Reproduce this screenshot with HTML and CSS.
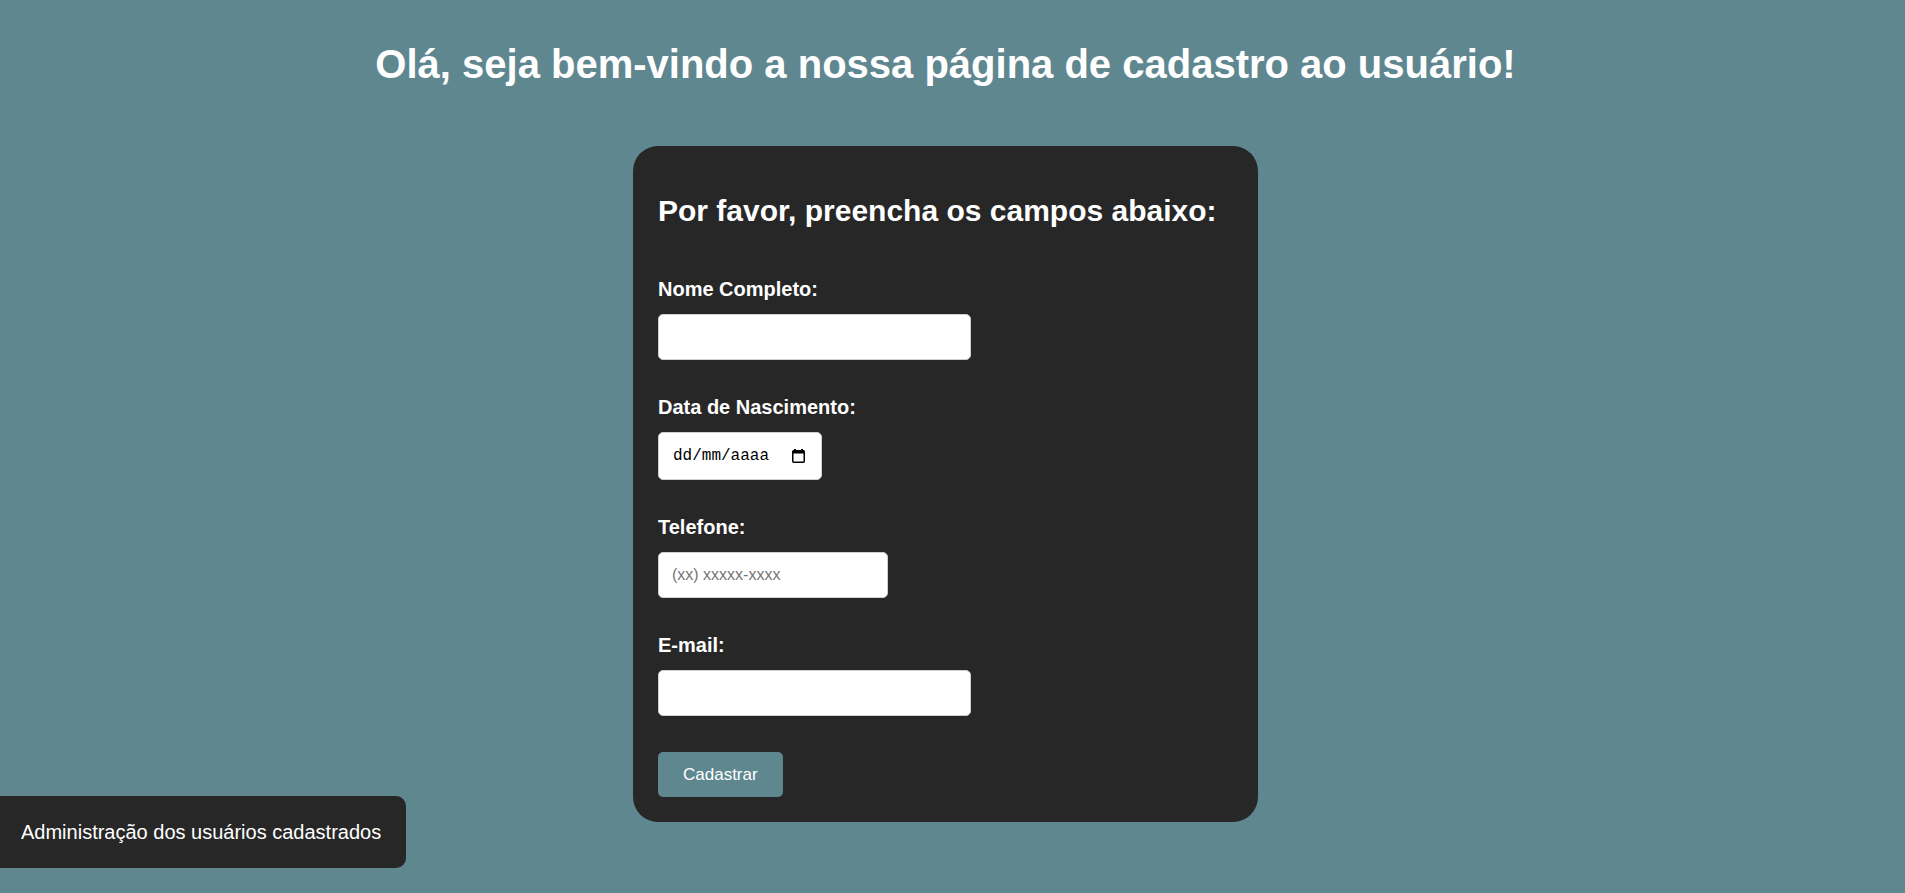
FILE: index.html
```html
<!DOCTYPE html>
<html lang="pt-BR">
<head>
<meta charset="utf-8">
<title>Cadastro de usuário</title>
<link rel="stylesheet" href="styles.css">
</head>
<body>
<main class="page">
  <h1 class="page-title">Olá, seja bem-vindo a nossa página de cadastro ao usuário!</h1>
  <form class="card">
    <h2 class="card-title">Por favor, preencha os campos abaixo:</h2>
    <label class="field-label" for="nome">Nome Completo:</label>
    <input class="field field-wide" type="text" id="nome">
    <label class="field-label" for="nasc">Data de Nascimento:</label>
    <div class="field field-date">
      <input class="date-text" type="text" id="nasc" placeholder="dd/mm/aaaa">
      <svg class="date-icon" width="13" height="14" viewBox="0 0 13 14" aria-hidden="true">
        <rect x="2" y="0" width="2" height="2" fill="#000"/>
        <rect x="9" y="0" width="2" height="2" fill="#000"/>
        <rect x="0.75" y="1.75" width="11.5" height="11.5" rx="1" fill="none" stroke="#000" stroke-width="1.5"/>
        <rect x="0.75" y="1.75" width="11.5" height="2.75" fill="#000"/>
      </svg>
    </div>
    <label class="field-label" for="tel">Telefone:</label>
    <input class="field field-tel" type="tel" id="tel" placeholder="(xx) xxxxx-xxxx">
    <label class="field-label" for="email">E-mail:</label>
    <input class="field field-wide" type="email" id="email">
    <div class="actions">
      <button class="submit" type="button">Cadastrar</button>
    </div>
  </form>
</main>
<a class="admin-link" href="#">Administração dos usuários cadastrados</a>
</body>
</html>
```

FILE: styles.css
```css
html, body {
  margin: 0;
  padding: 0;
}

body {
  background: #5f8790;
  font-family: "Liberation Sans", Arial, Helvetica, sans-serif;
  color: #ffffff;
  min-height: 893px;
}

.page {
  display: flex;
  flex-direction: column;
  align-items: center;
  padding-right: 14px;
}

.page-title {
  margin: 41px 0 0;
  font-size: 40px;
  font-weight: 700;
  line-height: 46px;
  text-align: center;
}

.card {
  margin-top: 59px;
  width: 625px;
  box-sizing: border-box;
  background: #272727;
  border-radius: 25px;
  padding: 25px;
  display: flex;
  flex-direction: column;
  align-items: flex-start;
}

.card-title {
  margin: 23px 0 50px;
  font-size: 30px;
  font-weight: 700;
  line-height: 34px;
}

.field-label {
  display: block;
  font-size: 20px;
  font-weight: 700;
  line-height: 22px;
  margin-bottom: 14px;
}

.field {
  box-sizing: border-box;
  height: 46px;
  margin: 0 0 36px;
  padding: 0 13px;
  border: 1px solid #cfcfcf;
  border-radius: 5px;
  background: #ffffff;
  font-family: "Liberation Sans", Arial, sans-serif;
  font-size: 16px;
  color: #000;
}

.field::placeholder {
  color: #757575;
}

.field-wide {
  width: 313px;
}

.field-tel {
  width: 230px;
}

.field-date {
  width: 164px;
  height: 48px;
  padding: 0 16px 0 14px;
  display: flex;
  align-items: center;
  justify-content: space-between;
}

.date-text {
  width: 100px;
  padding: 0;
  border: 0;
  outline: none;
  background: transparent;
  font-family: "Liberation Mono", "DejaVu Sans Mono", monospace;
  font-size: 16px;
  color: #000;
}

.date-text::placeholder {
  color: #000;
}

.date-icon {
  display: block;
  flex: none;
}

.actions {
  display: flex;
}

.submit {
  height: 45px;
  padding: 0 25px;
  border: 0;
  border-radius: 5px;
  background: #5f8790;
  color: #ffffff;
  font-family: "Liberation Sans", Arial, sans-serif;
  font-size: 17px;
}

.admin-link {
  position: fixed;
  left: 0;
  bottom: 25px;
  display: block;
  padding: 25px 25px 25px 21px;
  background: #272727;
  color: #ffffff;
  text-decoration: none;
  font-size: 20px;
  line-height: 22px;
  border-radius: 0 10px 10px 0;
}
```
